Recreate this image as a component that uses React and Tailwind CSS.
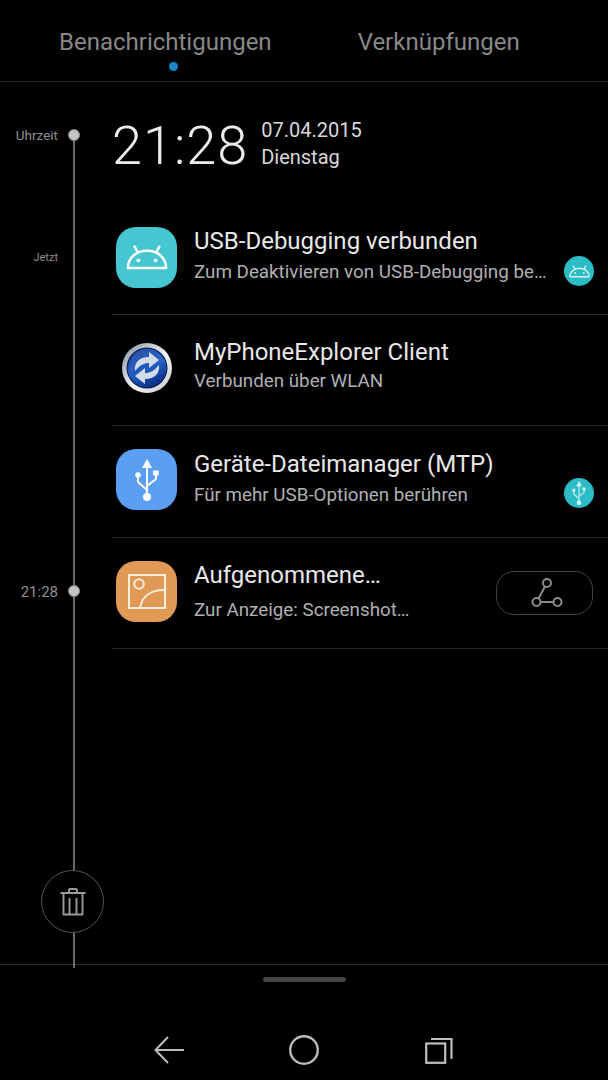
import React from 'react';

const font = { fontFamily: 'Roboto, sans-serif' };

// Android robot head used by the USB debugging icons
function AndroidHead({ className, strokeWidth = 2.6 }) {
  return (
    <svg viewBox="0 0 44 26" className={className} fill="none" stroke="currentColor" strokeWidth={strokeWidth} strokeLinecap="round" strokeLinejoin="round">
      <path d="M2 24 C2 13 11 6 22 6 C33 6 42 13 42 24 Z" />
      <path d="M9 1.5 L12.5 8 M35 1.5 L31.5 8" />
      <circle cx="13" cy="16" r="2" fill="currentColor" stroke="none" />
      <circle cx="31" cy="16" r="2" fill="currentColor" stroke="none" />
    </svg>
  );
}

function UsbIcon({ className }) {
  return (
    <svg viewBox="0 0 24 42" className={className} fill="none" stroke="currentColor" strokeWidth="1.9" strokeLinejoin="round">
      <path d="M12 7 V37" />
      <path d="M12 0 L17 9 H7 Z" fill="currentColor" stroke="none" />
      <path d="M3 16 V23 L12 31" />
      <path d="M21 15 V20 L12 27" />
      <circle cx="3" cy="16" r="2.8" fill="currentColor" stroke="none" />
      <rect x="18" y="11.5" width="5.6" height="5" fill="currentColor" stroke="none" />
      <circle cx="12" cy="38" r="4" fill="currentColor" stroke="none" />
    </svg>
  );
}

function PhoneExplorerIcon() {
  return (
    <svg viewBox="0 0 50 50" className="w-[50px] h-[50px]">
      <defs>
        <linearGradient id="ring" x1="0" y1="0" x2="1" y2="1">
          <stop offset="0" stopColor="#7f8ba0" />
          <stop offset="0.55" stopColor="#f4f5f7" />
          <stop offset="1" stopColor="#c4c7ce" />
        </linearGradient>
        <linearGradient id="ball" x1="0.2" y1="0" x2="0.7" y2="1">
          <stop offset="0" stopColor="#163a94" />
          <stop offset="0.55" stopColor="#1f5cc0" />
          <stop offset="1" stopColor="#0b2a7e" />
        </linearGradient>
      </defs>
      <circle cx="25" cy="25" r="25" fill="url(#ring)" />
      <circle cx="25" cy="25" r="20.5" fill="#0a1a4a" />
      <circle cx="25" cy="25" r="19.5" fill="url(#ball)" />
      <path d="M8 32 C16 22 30 18 43 20 C41 11 33 6 25 6 C14 6 6 15 8 32 Z" fill="#3f6fc4" opacity="0.45" />
      <path d="M13 28 C12 20 17 14 27 14 L27 9 L37 17 L27 25 L27 20 C22 20 18 22 13 28 Z" fill="#d3dbe8" />
      <path d="M37 22 C38 30 33 36 23 36 L23 41 L13 33 L23 25 L23 30 C28 30 32 28 37 22 Z" fill="#d3dbe8" />
    </svg>
  );
}

function ScreenshotIcon() {
  return (
    <svg viewBox="0 0 38 35" className="w-[38px] h-[35px]" fill="none" stroke="#fbeedd" strokeWidth="2">
      <rect x="1" y="1" width="36" height="33" />
      <circle cx="11" cy="10" r="4.8" />
      <path d="M12 34 C14 22 23 16 36 16" />
    </svg>
  );
}

function AppTile({ color, children }) {
  return (
    <div className={`w-[61px] h-[61px] rounded-[20px] flex items-center justify-center text-white ${color}`}>
      {children}
    </div>
  );
}

function Badge({ children }) {
  return (
    <div className="w-[30px] h-[30px] rounded-full bg-[#2bbcc6] flex items-center justify-center text-[#d5f3f5]">
      {children}
    </div>
  );
}

function Gutter({ label, dot, className, labelClass }) {
  return (
    <div className={`w-[112px] shrink-0 flex items-center ${className}`}>
      <span className={`w-[58px] text-right leading-[16px] text-[#909090] ${labelClass}`}>{label}</span>
      {dot && <span className="relative ml-[10px] w-[12px] h-[12px] rounded-full bg-[#c4c4c4] border border-[#888]" />}
    </div>
  );
}

function NotificationRow({ label, dot, gutterClass, labelClass, iconTop, icon, title, subtitle, right, titleTop, subGap }) {
  return (
    <div className="flex h-[111.2px] items-start">
      <Gutter label={label} dot={dot} className={gutterClass} labelClass={labelClass} />
      <div className="flex-1 h-full border-b border-[#242424] flex items-start min-w-0">
        <div className={`pl-[4px] w-[82px] shrink-0 ${iconTop}`}>{icon}</div>
        <div className={`flex-1 min-w-0 ${titleTop}`}>
          <div className="text-[24px] leading-[30px] text-[#e8e8e8] whitespace-nowrap">{title}</div>
          <div className={`text-[18.8px] leading-[28px] text-[#b0b0b0] whitespace-nowrap ${subGap}`}>{subtitle}</div>
        </div>
        {right}
      </div>
    </div>
  );
}

export default function App() {
  return (
    <div style={font} className="relative w-[608px] h-[1080px] bg-black overflow-hidden flex flex-col">
      {/* Timeline line */}
      <div className="absolute left-[73px] top-[135px] h-[833px] w-[2px] bg-[#6c6c6c]" />

      {/* Tabs */}
      <div className="h-[82px] shrink-0 border-b border-[#242424] flex items-start pt-[26px] pl-[59px] gap-[86px]">
        <div className="flex flex-col items-center">
          <span className="text-[24px] leading-[32px] text-[#888888]">Benachrichtigungen</span>
          <span className="mt-[4px] ml-[17px] w-[9px] h-[9px] rounded-full bg-[#1b86c9]" />
        </div>
        <span className="text-[24px] leading-[32px] text-[#888888]">Verknüpfungen</span>
      </div>

      {/* Clock */}
      <div className="flex h-[122px] shrink-0 relative">
        <Gutter label="Uhrzeit" dot className="h-[24px] mt-[41px]" labelClass="text-[13.5px]" />
        <div className="flex items-start pt-[31px]">
          <span className="text-[54px] leading-[66px] font-light text-[#ececec] tracking-[1px]">21:28</span>
          <div className="ml-[13px] pt-[4px] text-[20px] leading-[27px] text-[#d8d8d8]">
            <div>07.04.2015</div>
            <div>Dienstag</div>
          </div>
        </div>
      </div>

      {/* Notifications */}
      <div className="flex flex-col">
        <NotificationRow
          label="Jetzt"
          gutterClass="h-[16px] mt-[46px]"
          labelClass="text-[11px]"
          iconTop="pt-[23px]"
          icon={<AppTile color="bg-[#46c6d0]"><AndroidHead className="w-[42px] h-[25px]" /></AppTile>}
          title="USB-Debugging verbunden"
          subtitle="Zum Deaktivieren von USB-Debugging be…"
          titleTop="pt-[22px]"
          subGap="mt-[2px]"
          right={<div className="shrink-0 w-[46px] pl-[2px] pt-[52px]"><Badge><AndroidHead className="w-[21px] h-[13px]" strokeWidth={3} /></Badge></div>}
        />
        <NotificationRow
          iconTop="pt-[28px]"
          icon={<div className="pl-[6px]"><PhoneExplorerIcon /></div>}
          title="MyPhoneExplorer Client"
          subtitle="Verbunden über WLAN"
          titleTop="pt-[22px]"
          subGap="mt-0"
        />
        <NotificationRow
          iconTop="pt-[23px]"
          icon={<AppTile color="bg-[#5b9ff2]"><UsbIcon className="w-[24px] h-[42px]" /></AppTile>}
          title="Geräte-Dateimanager (MTP)"
          subtitle="Für mehr USB-Optionen berühren"
          titleTop="pt-[23px]"
          subGap="mt-[2px]"
          right={<div className="shrink-0 w-[46px] pl-[2px] pt-[52px]"><Badge><UsbIcon className="w-[14px] h-[24px]" /></Badge></div>}
        />
        <NotificationRow
          label="21:28"
          dot
          gutterClass="h-[16px] mt-[45px]"
          labelClass="text-[15px] pt-[2px]"
          iconTop="pt-[23px]"
          icon={<AppTile color="bg-[#e09a55]"><ScreenshotIcon /></AppTile>}
          title="Aufgenommene…"
          subtitle="Zur Anzeige: Screenshot…"
          titleTop="pt-[22px]"
          subGap="mt-[6px]"
          right={
            <div className="shrink-0 pr-[15px] pt-[33px]">
              <div className="w-[97px] h-[44px] rounded-[18px] border border-[#444] flex items-center justify-center pl-[5px]">
                <svg viewBox="0 0 32 30" className="w-[32px] h-[30px]" fill="none" stroke="#8a8a8a" strokeWidth="2">
                  <circle cx="16" cy="5" r="4" />
                  <circle cx="5.5" cy="24" r="4" />
                  <circle cx="26.5" cy="24" r="4" />
                  <path d="M14 8.5 L7.5 20.5 M9.5 24 H22.5" />
                </svg>
              </div>
            </div>
          }
        />
      </div>

      {/* Delete button */}
      <div className="absolute left-[41px] top-[870px] w-[63px] h-[63px] rounded-full bg-black border border-[#555] flex items-center justify-center">
        <svg viewBox="0 0 26 28" className="w-[26px] h-[28px]" fill="none" stroke="#9a9a9a" strokeWidth="1.9" strokeLinejoin="round">
          <path d="M0.5 5 H25.5 M9 5 V2 Q9 1 10 1 H16 Q17 1 17 2 V5" />
          <path d="M3.5 5 V26.5 H22.5 V5" />
          <path d="M9.5 10 V26 M16.5 10 V26" />
        </svg>
      </div>

      {/* Bottom bar */}
      <div className="mt-auto h-[116px] shrink-0 border-t border-[#2e2e2e] flex flex-col items-center">
        <div className="mt-[12px] w-[83px] h-[5px] rounded-full bg-[#444]" />
        <div className="mt-[53px] mr-[2px] flex items-center">
          <svg viewBox="0 0 30 28" className="w-[30px] h-[28px]" fill="none" stroke="#bdbdbd" strokeWidth="2">
            <path d="M14 1 L1.5 14 L14 27 M1.5 14 H30" />
          </svg>
          <svg viewBox="0 0 30 30" className="ml-[105px] w-[30px] h-[30px]" fill="none" stroke="#bdbdbd" strokeWidth="2.4">
            <circle cx="15" cy="15" r="13.8" />
          </svg>
          <svg viewBox="0 0 28 27" className="ml-[106px] w-[28px] h-[27px]" fill="none" stroke="#bdbdbd" strokeWidth="2.2">
            <rect x="1.2" y="6.5" width="19" height="19.3" />
            <path d="M6 2 H26.5 V22" />
          </svg>
        </div>
      </div>
    </div>
  );
}
